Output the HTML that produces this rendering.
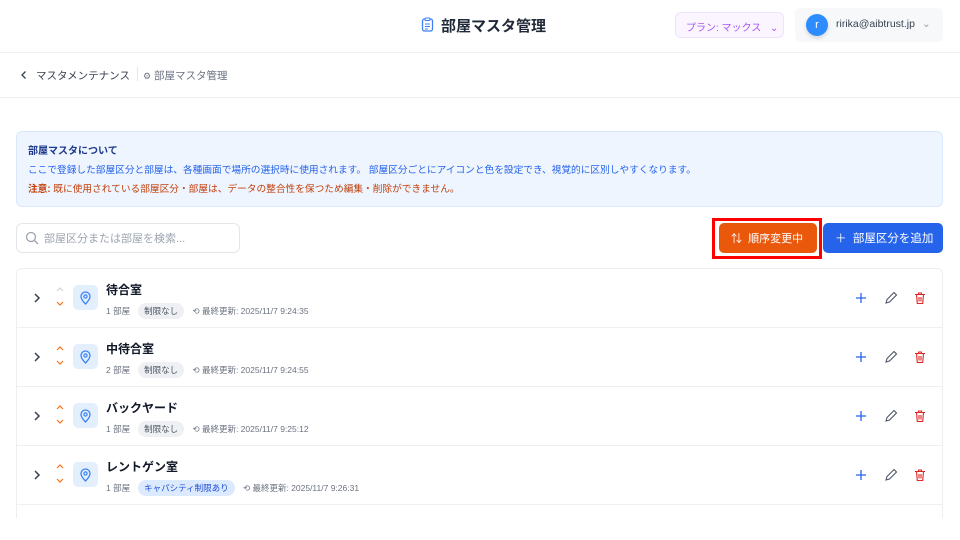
<!DOCTYPE html><html><head><meta charset="utf-8"><style>
*{box-sizing:border-box;margin:0;padding:0}
body{width:960px;height:540px;overflow:hidden;background:#fff;font-family:"Liberation Sans","Noto Sans CJK JP",sans-serif;color:#1f2937;position:relative}
.abs{position:absolute}
.hdr{left:0;top:0;width:960px;height:53px;border-bottom:1px solid #f0f1f3}
.bc{left:0;top:53px;width:960px;height:45px;border-bottom:1px solid #eef0f2}
.info{left:16px;top:131px;width:927px;height:76px;background:#eef5ff;border:1px solid #dbe8fb;border-radius:6px}
.search{left:16px;top:223px;width:224px;height:30px;border:1px solid #e3e6ea;border-radius:6px}
.list{left:16px;top:268px;width:927px;height:250px;border:1px solid #eceef1;border-bottom:none;border-radius:6px 6px 0 0}
.row{position:absolute;left:0;width:925px;height:59px;border-bottom:1px solid #eef0f2}
.pin{position:absolute;left:57px;top:16px;width:25px;height:25px;background:#e3effd;border-radius:5px}
.nm{position:absolute;left:90px;top:12px;font-size:12px;font-weight:bold;color:#111827}
.meta{position:absolute;left:90px;top:34px;font-size:8.5px;color:#6b7280;white-space:nowrap}
.tag{display:inline-block;background:#eef0f3;border-radius:8px;padding:2px 6px;margin:0 6px 0 8px;color:#4b5563}
.tag.b{background:#dbeafe;color:#1d4ed8}
.chev{position:absolute;left:16px;top:23px}
.ud{position:absolute;left:38px;top:17px}
</style></head><body>
<div class="abs hdr"></div>
<svg class="abs" style="left:421px;top:17px" width="13" height="15" viewBox="0 0 13 15"><rect x="1.5" y="2" width="10" height="12" rx="2" fill="none" stroke="#3b82f6" stroke-width="1.3"/><rect x="4" y="1" width="5" height="2.5" rx="1" fill="#fff" stroke="#3b82f6" stroke-width="1.1"/><path d="M4 7h5M4 9.5h5M4 12h3" stroke="#3b82f6" stroke-width="1"/></svg>
<div class="abs" style="left:441px;top:15px;font-size:15px;font-weight:bold;color:#1f2937">部屋マスタ管理</div>
<div class="abs" style="left:675px;top:12px;width:109px;height:26px;background:#faf5ff;border:1px solid #efe2fd;border-radius:6px;font-size:10px;color:#a855f7;padding:6px 0 0 10px">プラン: マックス <span style="margin-left:6px">⌄</span></div>
<div class="abs" style="left:795px;top:8px;width:148px;height:34px;background:#f7f8fa;border-radius:6px"></div>
<div class="abs" style="left:806px;top:14px;width:22px;height:22px;border-radius:50%;background:#2d8cff;color:#fff;font-size:11px;text-align:center;line-height:22px;box-shadow:0 2px 4px rgba(0,0,0,.15)">r</div>
<div class="abs" style="left:836px;top:18px;font-size:10.5px;color:#374151">ririka@aibtrust.jp <span style="color:#9ca3af;margin-left:4px">⌄</span></div>
<div class="abs bc"></div>
<svg class="abs" style="left:20px;top:70px" width="8" height="10" viewBox="0 0 8 10"><path d="M5.5 1.5L2 5l3.5 3.5" fill="none" stroke="#374151" stroke-width="1.3"/></svg>
<div class="abs" style="left:36px;top:68px;font-size:10.5px;color:#374151">マスタメンテナンス</div>
<div class="abs" style="left:137px;top:67px;width:1px;height:14px;background:#e5e7eb"></div>
<div class="abs" style="left:143px;top:68px;font-size:10.5px;color:#6b7280"><span style="font-size:9px">⚙</span> 部屋マスタ管理</div>
<div class="abs info"></div>
<div class="abs" style="left:28px;top:142px;font-size:10px;font-weight:bold;color:#1e3a8a">部屋マスタについて</div>
<div class="abs" style="left:28px;top:162px;font-size:9.7px;color:#2563eb;white-space:nowrap">ここで登録した部屋区分と部屋は、各種画面で場所の選択時に使用されます。 部屋区分ごとにアイコンと色を設定でき、視覚的に区別しやすくなります。</div>
<div class="abs" style="left:28px;top:181px;font-size:9.7px;color:#c2410c;white-space:nowrap"><b>注意:</b> 既に使用されている部屋区分・部屋は、データの整合性を保つため編集・削除ができません。</div>
<div class="abs search"></div>
<svg class="abs" style="left:25px;top:231px" width="14" height="14" viewBox="0 0 14 14"><circle cx="6" cy="6" r="4.5" fill="none" stroke="#9ca3af" stroke-width="1.3"/><path d="M9.5 9.5L13 13" stroke="#9ca3af" stroke-width="1.3"/></svg>
<div class="abs" style="left:44px;top:230px;font-size:11px;color:#9ca3af">部屋区分または部屋を検索...</div>
<div class="abs" style="left:712px;top:218px;width:110px;height:41px;border:3px solid #f00"></div>
<div class="abs" style="left:719px;top:223px;width:98px;height:30px;background:#ea580c;border-radius:5px;color:#fff;font-size:11px;padding:7px 0 0 12px">⇅ &nbsp;順序変更中</div>
<div class="abs" style="left:823px;top:223px;width:120px;height:30px;background:#2563eb;border-radius:5px;color:#fff;font-size:11.5px;padding:7px 0 0 12px">＋ &nbsp;部屋区分を追加</div>
<div class="abs list">
<div class="row" style="top:0"></div><div class="row" style="top:59px"></div><div class="row" style="top:118px"></div><div class="row" style="top:177px"></div>
</div>
<div class="abs" style="left:16px;top:269px;width:925px;height:240px">
 <div class="row" style="top:0;border:none"><svg class="chev" width="10" height="12" viewBox="0 0 10 12"><path d="M3 2l4 4-4 4" fill="none" stroke="#374151" stroke-width="1.5"/></svg><svg class="ud" width="12" height="22" viewBox="0 0 12 22"><path d="M3 5l3-3 3 3" fill="none" stroke="#d1d5db" stroke-width="1.2"/><path d="M3 16l3 3 3-3" fill="none" stroke="#f97316" stroke-width="1.2"/></svg><div class="pin"><svg width="25" height="25" viewBox="0 0 25 25"><path d="M12.5 19s-4.5-4.5-4.5-7.5a4.5 4.5 0 0 1 9 0c0 3-4.5 7.5-4.5 7.5z" fill="none" stroke="#3b82f6" stroke-width="1.3"/><circle cx="12.5" cy="11.5" r="1.6" fill="none" stroke="#3b82f6" stroke-width="1.2"/></svg></div><div class="nm">待合室</div><div class="meta">1 部屋<span class="tag">制限なし</span> ⟲ 最終更新: 2025/11/7 9:24:35</div></div>
 <div class="row" style="top:59px;border:none"><svg class="chev" width="10" height="12" viewBox="0 0 10 12"><path d="M3 2l4 4-4 4" fill="none" stroke="#374151" stroke-width="1.5"/></svg><svg class="ud" width="12" height="22" viewBox="0 0 12 22"><path d="M3 5l3-3 3 3" fill="none" stroke="#f97316" stroke-width="1.2"/><path d="M3 16l3 3 3-3" fill="none" stroke="#f97316" stroke-width="1.2"/></svg><div class="pin"><svg width="25" height="25" viewBox="0 0 25 25"><path d="M12.5 19s-4.5-4.5-4.5-7.5a4.5 4.5 0 0 1 9 0c0 3-4.5 7.5-4.5 7.5z" fill="none" stroke="#3b82f6" stroke-width="1.3"/><circle cx="12.5" cy="11.5" r="1.6" fill="none" stroke="#3b82f6" stroke-width="1.2"/></svg></div><div class="nm">中待合室</div><div class="meta">2 部屋<span class="tag">制限なし</span> ⟲ 最終更新: 2025/11/7 9:24:55</div></div>
 <div class="row" style="top:118px;border:none"><svg class="chev" width="10" height="12" viewBox="0 0 10 12"><path d="M3 2l4 4-4 4" fill="none" stroke="#374151" stroke-width="1.5"/></svg><svg class="ud" width="12" height="22" viewBox="0 0 12 22"><path d="M3 5l3-3 3 3" fill="none" stroke="#f97316" stroke-width="1.2"/><path d="M3 16l3 3 3-3" fill="none" stroke="#f97316" stroke-width="1.2"/></svg><div class="pin"><svg width="25" height="25" viewBox="0 0 25 25"><path d="M12.5 19s-4.5-4.5-4.5-7.5a4.5 4.5 0 0 1 9 0c0 3-4.5 7.5-4.5 7.5z" fill="none" stroke="#3b82f6" stroke-width="1.3"/><circle cx="12.5" cy="11.5" r="1.6" fill="none" stroke="#3b82f6" stroke-width="1.2"/></svg></div><div class="nm">バックヤード</div><div class="meta">1 部屋<span class="tag">制限なし</span> ⟲ 最終更新: 2025/11/7 9:25:12</div></div>
 <div class="row" style="top:177px;border:none"><svg class="chev" width="10" height="12" viewBox="0 0 10 12"><path d="M3 2l4 4-4 4" fill="none" stroke="#374151" stroke-width="1.5"/></svg><svg class="ud" width="12" height="22" viewBox="0 0 12 22"><path d="M3 5l3-3 3 3" fill="none" stroke="#f97316" stroke-width="1.2"/><path d="M3 16l3 3 3-3" fill="none" stroke="#f97316" stroke-width="1.2"/></svg><div class="pin"><svg width="25" height="25" viewBox="0 0 25 25"><path d="M12.5 19s-4.5-4.5-4.5-7.5a4.5 4.5 0 0 1 9 0c0 3-4.5 7.5-4.5 7.5z" fill="none" stroke="#3b82f6" stroke-width="1.3"/><circle cx="12.5" cy="11.5" r="1.6" fill="none" stroke="#3b82f6" stroke-width="1.2"/></svg></div><div class="nm">レントゲン室</div><div class="meta">1 部屋<span class="tag b">キャパシティ制限あり</span> ⟲ 最終更新: 2025/11/7 9:26:31</div></div>
</div>
<div class="abs" style="left:852px;top:281px;width:80px;height:240px">
<svg width="80" height="240" viewBox="0 0 80 240">
<g id="a"><path d="M9 12v10M4 17h10" stroke="#2563eb" stroke-width="1.3"/><path d="M34 22l1-3.5 7-7 2.5 2.5-7 7z" fill="none" stroke="#4b5563" stroke-width="1.1"/><path d="M63 13.5h10M66.5 13.5v-1.5h3v1.5M64.5 13.5l.8 9h5.4l.8-9M67 16v4.5M69 16v4.5" fill="none" stroke="#dc2626" stroke-width="1.1"/></g>
<use href="#a" y="59"/><use href="#a" y="118"/><use href="#a" y="177"/>
</svg></div>
</body></html>
